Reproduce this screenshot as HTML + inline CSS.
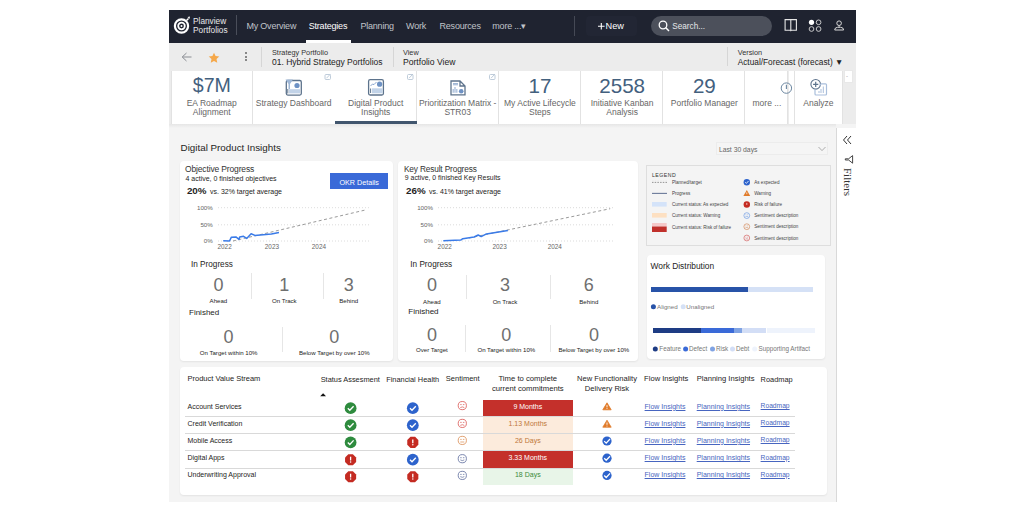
<!DOCTYPE html>
<html><head><meta charset="utf-8">
<style>
*{margin:0;padding:0;box-sizing:border-box}
html,body{width:1024px;height:512px;overflow:hidden;background:#fff;font-family:"Liberation Sans",sans-serif}
#app{position:absolute;left:169px;top:10px;width:687px;height:492px;background:#f4f4f4;overflow:hidden}
.a{position:absolute}
.t{position:absolute;white-space:nowrap;line-height:1}
.nav{left:0;top:0;width:687px;height:33px;background:#1f2330}
.tb{left:0;top:33px;width:687px;height:27px;background:#ececec}
.cards{left:0;top:60px;width:687px;height:54px;background:#ececec}
.card{position:absolute;top:0.5px;height:53.5px;background:#fff;border-right:1px solid #e2e2e2}
.main{left:0;top:114px;width:667px;height:378px;background:#f3f3f3}
.panel{position:absolute;background:#fff;border-radius:4px}
.cl{text-align:center;font-size:8.5px;line-height:9.5px;color:#666}
.big{top:6.2px;text-align:center;font-size:20.6px;color:#43607e}
</style></head><body>
<div id="app">
  <!-- NAV -->
  <div class="a nav">
    <svg class="a" style="left:4px;top:6px" width="22" height="22" viewBox="0 0 22 22">
      <circle cx="8.5" cy="10" r="6.6" fill="none" stroke="#fff" stroke-width="2.2"/>
      <circle cx="8.5" cy="10" r="3.3" fill="none" stroke="#fff" stroke-width="1.8"/>
      <circle cx="8.5" cy="10" r="1" fill="#fff"/>
      <path d="M13.5 4.5 L15.5 2.5" stroke="#fff" stroke-width="1.5"/>
      <path d="M14.5 1 L17 0.5 L16.5 3 Z" fill="#fff"/>
    </svg>
    <div class="t" style="left:24px;top:7px;font-size:8.3px;color:#e8e8ea">Planview</div>
    <div class="t" style="left:24px;top:16px;font-size:8.3px;color:#e8e8ea">Portfolios</div>
    <div class="a" style="left:67px;top:5px;width:1px;height:20px;background:#4a4e5a"></div>
    <div class="t" style="left:77.4px;top:12.2px;font-size:9px;letter-spacing:-0.2px;color:#c0c3ca">My Overview</div>
    <div class="t" style="left:139.7px;top:12.2px;font-size:9px;letter-spacing:-0.2px;color:#fff">Strategies</div>
    <div class="a" style="left:136.5px;top:30px;width:45px;height:3px;background:#fff"></div>
    <div class="t" style="left:191.4px;top:12.2px;font-size:9px;letter-spacing:-0.2px;color:#c0c3ca">Planning</div>
    <div class="t" style="left:237.1px;top:12.2px;font-size:9px;letter-spacing:-0.2px;color:#c0c3ca">Work</div>
    <div class="t" style="left:270.5px;top:12.2px;font-size:9px;letter-spacing:-0.2px;color:#c0c3ca">Resources</div>
    <div class="t" style="left:323.3px;top:12.2px;font-size:9px;letter-spacing:-0.2px;color:#c0c3ca">more ...▾</div>
    <div class="a" style="left:405px;top:5.5px;width:1px;height:20px;background:#454955"></div>
    <div class="a" style="left:417px;top:5.5px;width:50.5px;height:20px;background:#222634;border-radius:4px"></div>
    <svg class="a" style="left:428.5px;top:13px" width="7" height="7" viewBox="0 0 7 7"><path d="M3.3 0 V6.4 M0 3.2 H6.6" stroke="#fff" stroke-width="1.1"/></svg>
    <div class="t" style="left:436.6px;top:11.7px;font-size:9.2px;color:#fff">New</div>
<div class="a" style="left:482px;top:5.5px;width:121px;height:20px;background:#4c505b;border-radius:10px"></div>
    <svg class="a" style="left:488.7px;top:10px" width="12" height="12" viewBox="0 0 12 12"><circle cx="5" cy="5" r="3.8" fill="none" stroke="#fff" stroke-width="1.3"/><path d="M7.8 7.8 L11 11" stroke="#fff" stroke-width="1.5"/></svg>
    <div class="t" style="left:503.3px;top:12.9px;font-size:8.2px;color:#e6e7ea">Search...</div>
    <svg class="a" style="left:0;top:0" width="687" height="33" viewBox="0 0 687 33">
      <path d="M616.1 9.6 H621.8 V20.3 H616.1 Z M621.8 9.6 H627.4 V20.3 H621.8 Z" fill="none" stroke="#e6e6e6" stroke-width="1.1"/>
      <path d="M620.6 20.3 L621.8 21.6 L623 20.3 Z" fill="#e6e6e6"/>
      <circle cx="642.5" cy="12.3" r="2.6" fill="#fff"/>
      <circle cx="649.6" cy="12.3" r="2.35" fill="none" stroke="#d8d8d8" stroke-width="0.9"/>
      <circle cx="642.5" cy="19" r="2.35" fill="none" stroke="#d8d8d8" stroke-width="0.9"/>
      <circle cx="649.6" cy="19" r="2.35" fill="none" stroke="#d8d8d8" stroke-width="0.9"/>
      <circle cx="670.1" cy="13.2" r="2.3" fill="none" stroke="#d8d8d8" stroke-width="1"/>
      <path d="M670.1 15.5 V17.3" stroke="#d8d8d8" stroke-width="0.9"/>
      <path d="M665.7 20 Q665.7 17.5 668.5 17.3 H671.7 Q674.6 17.5 674.6 20 Z" fill="none" stroke="#d8d8d8" stroke-width="1"/>
    </svg>
  </div>

  <!-- TOOLBAR -->
  <div class="a tb">
    <svg class="a" style="left:11.5px;top:8.6px" width="11" height="10" viewBox="0 0 11 10"><path d="M10.5 5 H1.5 M5.5 1 L1.2 5 L5.5 9" fill="none" stroke="#8a8d93" stroke-width="1"/></svg>
    <svg class="a" style="left:39px;top:8.5px" width="12" height="12" viewBox="0 0 24 24"><path d="M12 1.5 L15.1 8.2 L22.5 9 L17 14 L18.5 21.5 L12 17.8 L5.5 21.5 L7 14 L1.5 9 L8.9 8.2 Z" fill="#f5a84a"/></svg>
    <div class="a" style="left:75.8px;top:9px;width:2px;height:2px;border-radius:1px;background:#666"></div>
    <div class="a" style="left:75.8px;top:12.5px;width:2px;height:2px;border-radius:1px;background:#666"></div>
    <div class="a" style="left:75.8px;top:16px;width:2px;height:2px;border-radius:1px;background:#666"></div>
    <div class="a" style="left:92px;top:3.5px;width:1px;height:20px;background:#d6d6d6"></div>
    <div class="t" style="left:103px;top:5.8px;font-size:7.3px;color:#333">Strategy Portfolio</div>
    <div class="t" style="left:103px;top:14.6px;font-size:8.5px;color:#222">01. Hybrid Strategy Portfolios</div>
    <div class="a" style="left:223.5px;top:3.5px;width:1px;height:20px;background:#d6d6d6"></div>
    <div class="t" style="left:234px;top:5.8px;font-size:7.3px;color:#333">View</div>
    <div class="t" style="left:234px;top:14.6px;font-size:8.6px;color:#222">Portfolio View</div>
    <div class="a" style="left:558px;top:3.5px;width:1px;height:19px;background:#d6d6d6"></div>
    <div class="t" style="left:568.7px;top:5.8px;font-size:7.3px;color:#333">Version</div>
    <div class="t" style="left:568.7px;top:14.6px;font-size:8.3px;color:#222">Actual/Forecast (forecast) &#9660;</div>
  </div>
  <!-- CARDS -->
  <div class="a cards">
    <div class="card" style="left:1.5px;width:82px;border-left:1px solid #e2e2e2"></div>
    <div class="card" style="left:83.5px;width:82.3px"></div>
    <div class="card" style="left:165.4px;width:82.2px"></div>
    <div class="card" style="left:247.6px;width:82.2px"></div>
    <div class="card" style="left:329.8px;width:82.2px"></div>
    <div class="card" style="left:412px;width:82.3px"></div>
    <div class="card" style="left:494.3px;width:82.1px"></div>
    <div class="card" style="left:576.4px;width:43.1px"></div>
    <div class="card" style="left:619.5px;width:6px;background:#fff"></div>
    <div class="card" style="left:625.4px;width:48.2px;border-left:1px solid #e2e2e2"></div>
    <div class="a" style="left:674.6px;top:0.3px;width:9px;height:12.7px;background:#fff;border:1px solid #e8e8e8"></div>
    <div class="t" style="left:677px;top:3px;font-size:6px;color:#999">-</div>
    <div class="a" style="left:165.8px;top:50.5px;width:81.8px;height:3.5px;background:#41566e"></div>
    <!-- card contents -->
    <div class="t" style="left:23.8px;top:5.8px;font-size:19.6px;color:#43607e">$7M</div>
    <div class="t cl" style="left:2px;width:81.5px;top:28.8px">EA Roadmap<br>Alignment</div>
    <div class="t cl" style="left:83.5px;width:82.3px;top:28.8px">Strategy Dashboard</div>
    <div class="t cl" style="left:165.8px;width:81.8px;top:28.8px">Digital Product<br>Insights</div>
    <div class="t cl" style="left:247.6px;width:82.2px;top:28.8px">Prioritization Matrix -<br>STR03</div>
    <div class="t big" style="left:329.8px;width:82.2px">17</div>
    <div class="t cl" style="left:329.8px;width:82.2px;top:28.8px">My Active Lifecycle<br>Steps</div>
    <div class="t big" style="left:412px;width:82.3px">2558</div>
    <div class="t cl" style="left:412px;width:82.3px;top:28.8px">Initiative Kanban<br>Analysis</div>
    <div class="t big" style="left:494.3px;width:82.1px">29</div>
    <div class="t cl" style="left:494.3px;width:82.1px;top:28.8px">Portfolio Manager</div>
    <div class="t cl" style="left:576.4px;width:43.1px;top:28.8px">more ...</div>
    <div class="t cl" style="left:625.4px;width:48.2px;top:28.8px">Analyze</div>
    <svg class="a" style="left:0;top:0" width="687" height="54" viewBox="0 0 687 54">
      <g stroke="#5d738c" fill="none" stroke-width="1.3">
        <rect x="117.3" y="10.5" width="15" height="14.6" rx="1.5"/>
        <rect x="199.6" y="9.7" width="14.8" height="15.3" rx="1.5"/>
        <path d="M282 11 H291 L296 16 V24.9 H282 Z M291 11 V16 H296"/>
        <circle cx="617.4" cy="18.1" r="5.2" stroke="#6b86a0" stroke-width="1"/>
        <circle cx="646.7" cy="14.3" r="4.8" stroke="#5d738c" stroke-width="1.1"/>
      </g>
      <path d="M617.4 14.8 V19" stroke="#6b86a0" stroke-width="1.1"/>
      <path d="M644.1 14.3 H649.3 M646.7 11.7 V16.9" stroke="#5d738c" stroke-width="1.2"/>
      <path d="M650.8 15.8 A5.6 5.6 0 0 1 652 13.8 H656.5 Q657.5 13.8 657.5 14.8 V24 Q657.5 25 656.5 25 H647 Q646 25 646 24 V19.2" fill="none" stroke="#a9bedb" stroke-width="1.2"/>
      <path d="M650 23 V21 M652 23 V19 M654.3 23 V16.5" stroke="#a9bedb" stroke-width="1"/>
      <!-- strategy dash -->
      <path d="M116.5 9.5 H124 L121 14 V19 H119.5 V14 Z" fill="#9fb7d6"/>
      <circle cx="128" cy="15.5" r="2.6" fill="#6e92c4"/>
      <rect x="120" y="19.2" width="11" height="4.2" fill="#c2d3e8"/>
      <path d="M118.8 19 V23.5" stroke="#5d738c" stroke-width="1"/>
      <!-- dpi -->
      <path d="M201.5 16 L203.5 14 L205 14.6 L207.5 12" fill="none" stroke="#6e92c4" stroke-width="0.8"/>
      <circle cx="210.6" cy="14.2" r="2.6" fill="#6e92c4"/>
      <rect x="203" y="18.3" width="10.5" height="5" fill="#c2d3e8"/>
      <path d="M201.6 18.5 V23" stroke="#5d738c" stroke-width="1"/>
      <!-- prior -->
      <path d="M284 13.6 H289 M284 14.8 H289" stroke="#8aa6cc" stroke-width="0.9"/>
      <path d="M284.2 22.8 V19 M286 22.8 V17 M287.8 22.8 V19" stroke="#a9bedb" stroke-width="1.3"/>
      <circle cx="292.2" cy="21.2" r="2.3" fill="#6e92c4"/>
      <g stroke="#b8c6d6" fill="none" stroke-width="0.9">
        <rect x="156" y="4.5" width="5.5" height="5" rx="1"/><path d="M157.5 8.2 L161.5 4"/>
        <rect x="238.5" y="4.5" width="5.5" height="5" rx="1"/><path d="M240 8.2 L244 4"/>
        <rect x="320.5" y="4.5" width="5.5" height="5" rx="1"/><path d="M322 8.2 L326 4"/>
      </g>
    </svg>
  </div>
  <div class="a" style="left:0;top:114px;width:667px;height:4px;background:linear-gradient(#e6e6e6,#f4f4f4)"></div>
<!-- MAIN -->
<div class="t" style="left:11.6px;top:132.7px;font-size:9.8px;color:#252423;">Digital Product Insights</div>
<div class="a" style="left:547.0px;top:131.7px;width:112.1px;height:13.5px;background:#f5f5f5;border:1px solid #ececec"></div>
<div class="t" style="left:549.9px;top:136.5px;font-size:6.8px;color:#666;">Last 30 days</div>
<svg class="a" style="left:649px;top:136px" width="8" height="6" viewBox="0 0 8 6"><path d="M0.5 1 L4 4.6 L7.5 1" fill="none" stroke="#999" stroke-width="0.8"/></svg>
<div class="a" style="left:10.8px;top:150.9px;width:213.1px;height:200.4px;background:#fff;border-radius:4px;box-shadow:0 1px 2px rgba(0,0,0,0.07)"></div>
<div class="a" style="left:229.2px;top:151.2px;width:240.3px;height:200.1px;background:#fff;border-radius:4px;box-shadow:0 1px 2px rgba(0,0,0,0.07)"></div>
<div class="a" style="left:477.4px;top:155.3px;width:184.6px;height:80.9px;background:#f4f4f4;border:1px solid #dedede"></div>
<div class="a" style="left:478.0px;top:245.3px;width:177.6px;height:103.7px;background:#fff;border-radius:4px;box-shadow:0 1px 2px rgba(0,0,0,0.07)"></div>
<div class="a" style="left:10.7px;top:357.0px;width:646.9px;height:127.5px;background:#fff;border-radius:4px;box-shadow:0 1px 2px rgba(0,0,0,0.07)"></div>
<div class="a" style="left:666.6px;top:117.6px;width:20.4px;height:374.4px;background:#fff;border-left:1.6px solid #d9d9d9"></div>
<svg class="a" style="left:673px;top:125px" width="10" height="10" viewBox="0 0 10 10"><path d="M5 1 L1.5 5 L5 9 M9 1 L5.5 5 L9 9" fill="none" stroke="#333" stroke-width="1"/></svg>
<svg class="a" style="left:0;top:0" width="687" height="492" viewBox="0 0 687 492"><path d="M683.6 145.6 V153.2 L679.6 150 H676.3 V148.8 H679.6 Z" fill="none" stroke="#333" stroke-width="0.9" stroke-linejoin="round"/></svg>
<div class="t" style="left:673px;top:158.3px;font-family:'Liberation Serif',serif;font-size:11px;color:#333;transform-origin:0 0;transform:rotate(90deg) translate(0,-11px)">Filters</div>
<div class="t" style="left:16.0px;top:154.6px;font-size:8.5px;color:#333;letter-spacing:-0.15px">Objective Progress</div>
<div class="t" style="left:16.5px;top:164.7px;font-size:7px;color:#252423;">4 active, 0 finished objectives</div>
<div class="t" style="left:17.9px;top:175.9px;font-size:9.8px;color:#252423;"><b>20%</b></div>
<div class="t" style="left:41.0px;top:178.1px;font-size:7.0px;color:#252423;">vs. 32% target average</div>
<div class="a" style="left:161.1px;top:162.6px;width:58.1px;height:16.8px;background:#3a6ad8"></div>
<div class="t" style="left:161.2px;width:58px;text-align:center;top:168.7px;font-size:7.2px;color:#fff;">OKR Details</div>
<div class="t" style="left:-16.2px;width:60px;text-align:right;top:194.7px;font-size:6.2px;color:#666;">100%</div>
<div class="t" style="left:-16.2px;width:60px;text-align:right;top:211.8px;font-size:6.2px;color:#666;">50%</div>
<div class="t" style="left:-16.2px;width:60px;text-align:right;top:228.0px;font-size:6.2px;color:#666;">0%</div>
<svg class="a" style="left:0;top:0" width="687" height="492" viewBox="0 0 687 492"><path d="M49.1 197.7 H200.9" stroke="#c8c8c8" stroke-width="0.8" stroke-dasharray="0.8 2.2"/><path d="M49.1 214.8 H200.9" stroke="#c8c8c8" stroke-width="0.8" stroke-dasharray="0.8 2.2"/><path d="M49.1 231 H200.9" stroke="#c8c8c8" stroke-width="0.8" stroke-dasharray="0.8 2.2"/><path d="M64 231 L195.5 200.2" fill="none" stroke="#9a9a9a" stroke-width="1" stroke-dasharray="3 2.5"/><path d="M54.2 230.7 L60.5 231.0 L62.4 227.2 L66.9 226.9 L70.0 229.4 L70.7 226.9 L74.5 226.3 L77.7 228.4 L82.1 223.7 L85.9 225.4 L102.4 224.1 L110.0 222.5" fill="none" stroke="#3a7be8" stroke-width="1.5" stroke-linejoin="round"/></svg>
<div class="t" style="left:48.5px;top:234.1px;font-size:6.4px;color:#666;">2022</div>
<div class="t" style="left:95.8px;top:234.1px;font-size:6.4px;color:#666;">2023</div>
<div class="t" style="left:142.8px;top:234.1px;font-size:6.4px;color:#666;">2024</div>
<div class="t" style="left:22.0px;top:251.4px;font-size:8.2px;color:#252423;">In Progress</div>
<div class="t" style="left:-10.6px;width:120px;text-align:center;top:265.8px;font-size:18px;color:#6f6f6f;">0</div>
<div class="t" style="left:-10.6px;width:120px;text-align:center;top:287.8px;font-size:6.1px;color:#252423;">Ahead</div>
<div class="t" style="left:55.3px;width:120px;text-align:center;top:265.8px;font-size:18px;color:#6f6f6f;">1</div>
<div class="t" style="left:55.3px;width:120px;text-align:center;top:288.1px;font-size:6.1px;color:#252423;">On Track</div>
<div class="t" style="left:119.7px;width:120px;text-align:center;top:265.8px;font-size:18px;color:#6f6f6f;">3</div>
<div class="t" style="left:119.7px;width:120px;text-align:center;top:287.8px;font-size:6.1px;color:#252423;">Behind</div>
<div class="a" style="left:81.8px;top:263.4px;width:1.0px;height:25.3px;background:#e6e6e6"></div>
<div class="a" style="left:153.5px;top:263.4px;width:1.0px;height:25.3px;background:#e6e6e6"></div>
<div class="t" style="left:20.0px;top:298.8px;font-size:8px;color:#252423;">Finished</div>
<div class="t" style="left:-0.4px;width:120px;text-align:center;top:318.1px;font-size:18px;color:#6f6f6f;">0</div>
<div class="t" style="left:-0.4px;width:120px;text-align:center;top:339.6px;font-size:6.1px;color:#252423;">On Target within 10%</div>
<div class="t" style="left:105.3px;width:120px;text-align:center;top:318.1px;font-size:18px;color:#6f6f6f;">0</div>
<div class="t" style="left:105.3px;width:120px;text-align:center;top:339.6px;font-size:6.1px;color:#252423;">Below Target by over 10%</div>
<div class="a" style="left:112.8px;top:317.0px;width:1.0px;height:25.0px;background:#e6e6e6"></div>
<div class="t" style="left:234.9px;top:154.8px;font-size:8.3px;color:#333;letter-spacing:-0.15px">Key Result Progress</div>
<div class="t" style="left:235.8px;top:164.8px;font-size:6.9px;color:#252423;">9 active, 0 finished Key Results</div>
<div class="t" style="left:237.0px;top:175.9px;font-size:9.8px;color:#252423;"><b>26%</b></div>
<div class="t" style="left:260.0px;top:178.1px;font-size:7.0px;color:#252423;">vs. 41% target average</div>
<div class="t" style="left:204.0px;width:60px;text-align:right;top:194.7px;font-size:6.2px;color:#666;">100%</div>
<div class="t" style="left:204.0px;width:60px;text-align:right;top:211.8px;font-size:6.2px;color:#666;">50%</div>
<div class="t" style="left:204.0px;width:60px;text-align:right;top:228.0px;font-size:6.2px;color:#666;">0%</div>
<svg class="a" style="left:0;top:0" width="687" height="492" viewBox="0 0 687 492"><path d="M269.2 197.7 H445.7" stroke="#c8c8c8" stroke-width="0.8" stroke-dasharray="0.8 2.2"/><path d="M269.2 214.8 H445.7" stroke="#c8c8c8" stroke-width="0.8" stroke-dasharray="0.8 2.2"/><path d="M269.2 231 H445.7" stroke="#c8c8c8" stroke-width="0.8" stroke-dasharray="0.8 2.2"/><path d="M300 228 L441.2 198.7" fill="none" stroke="#9a9a9a" stroke-width="1" stroke-dasharray="3 2.5"/><path d="M274.3 230.7 L291.7 230.1 L293.8 228.7 L305.1 227.0 L309.2 225.0 L312.2 226.6 L317.4 223.9 L338.9 220.5" fill="none" stroke="#3a7be8" stroke-width="1.5" stroke-linejoin="round"/></svg>
<div class="t" style="left:268.6px;top:234.1px;font-size:6.4px;color:#666;">2022</div>
<div class="t" style="left:323.5px;top:234.1px;font-size:6.4px;color:#666;">2023</div>
<div class="t" style="left:378.7px;top:234.1px;font-size:6.4px;color:#666;">2024</div>
<div class="t" style="left:241.3px;top:250.9px;font-size:8.2px;color:#252423;">In Progress</div>
<div class="t" style="left:202.9px;width:120px;text-align:center;top:266.2px;font-size:18px;color:#6f6f6f;">0</div>
<div class="t" style="left:202.9px;width:120px;text-align:center;top:288.8px;font-size:6.1px;color:#252423;">Ahead</div>
<div class="t" style="left:276.0px;width:120px;text-align:center;top:266.2px;font-size:18px;color:#6f6f6f;">3</div>
<div class="t" style="left:276.0px;width:120px;text-align:center;top:288.8px;font-size:6.1px;color:#252423;">On Track</div>
<div class="t" style="left:359.8px;width:120px;text-align:center;top:266.2px;font-size:18px;color:#6f6f6f;">6</div>
<div class="t" style="left:359.8px;width:120px;text-align:center;top:288.8px;font-size:6.1px;color:#252423;">Behind</div>
<div class="a" style="left:296.7px;top:265.4px;width:1.0px;height:24.1px;background:#e6e6e6"></div>
<div class="a" style="left:381.0px;top:265.4px;width:1.0px;height:24.1px;background:#e6e6e6"></div>
<div class="t" style="left:239.3px;top:298.4px;font-size:8px;color:#252423;">Finished</div>
<div class="t" style="left:202.9px;width:120px;text-align:center;top:315.7px;font-size:18px;color:#6f6f6f;">0</div>
<div class="t" style="left:202.9px;width:120px;text-align:center;top:336.8px;font-size:6.1px;color:#252423;">Over Target</div>
<div class="t" style="left:277.3px;width:120px;text-align:center;top:315.7px;font-size:18px;color:#6f6f6f;">0</div>
<div class="t" style="left:277.3px;width:120px;text-align:center;top:336.8px;font-size:6.1px;color:#252423;">On Target within 10%</div>
<div class="t" style="left:364.9px;width:120px;text-align:center;top:315.7px;font-size:18px;color:#6f6f6f;">0</div>
<div class="t" style="left:364.9px;width:120px;text-align:center;top:336.8px;font-size:6.1px;color:#252423;">Below Target by over 10%</div>
<div class="a" style="left:295.9px;top:315.0px;width:1.0px;height:26.6px;background:#e6e6e6"></div>
<div class="a" style="left:381.0px;top:315.0px;width:1.0px;height:26.6px;background:#e6e6e6"></div>
<div class="t" style="left:482.9px;top:162.5px;font-size:5.2px;color:#333;letter-spacing:0.5px">LEGEND</div>
<div class="t" style="left:502.9px;top:170.9px;font-size:4.6px;color:#444;">Planned/target</div>
<div class="t" style="left:502.9px;top:182.1px;font-size:4.6px;color:#444;">Progress</div>
<div class="t" style="left:502.9px;top:192.9px;font-size:4.6px;color:#444;">Current status: As expected</div>
<div class="t" style="left:502.9px;top:204.1px;font-size:4.6px;color:#444;">Current status: Warning</div>
<div class="t" style="left:502.9px;top:215.8px;font-size:4.6px;color:#444;">Current status: Risk of failure</div>
<svg class="a" style="left:0;top:0" width="687" height="492" viewBox="0 0 687 492"><path d="M483 172.5 H498" stroke="#888" stroke-width="0.8" stroke-dasharray="1.5 1.2"/><path d="M483 171.2 H498" stroke="#bbb" stroke-width="0.5" stroke-dasharray="0.6 1"/><path d="M483 183.4 H498" stroke="#6b7a99" stroke-width="1.1"/><rect x="483" y="192" width="14.7" height="4.6" fill="#d4e3f9"/><rect x="483" y="203" width="14.7" height="4.6" fill="#fde0c2"/><rect x="483" y="213" width="14.7" height="3.5" fill="#f5c9c9"/><rect x="483" y="216.5" width="14.7" height="5.5" fill="#c0302b"/><circle cx="577.8" cy="172.2" r="3.2" fill="#2d63cc"/><path d="M576.1999999999999 172.2 L577.4 173.39999999999998 L579.5 171.0" fill="none" stroke="#fff" stroke-width="0.8"/><path d="M577.8 180.1 L581.1999999999999 186.0 H574.4 Z" fill="#e07b2a"/><path d="M577.8 182.4 V184.20000000000002" stroke="#fff" stroke-width="0.7"/><circle cx="577.8" cy="194.5" r="3.2" fill="#c42b22"/><path d="M577.8 192.9 V194.9" stroke="#fff" stroke-width="0.7"/><circle cx="577.8" cy="205.6" r="2.9" fill="none" stroke="#5b8ee0" stroke-width="0.6"/><path d="M576.4 206.79999999999998 Q577.8 205.9 579.1999999999999 206.79999999999998" fill="none" stroke="#5b8ee0" stroke-width="0.5"/><path d="M576.5 204.79999999999998 H577.3 M578.3 204.79999999999998 H579.0999999999999" stroke="#5b8ee0" stroke-width="0.5"/><circle cx="577.8" cy="216.7" r="2.9" fill="none" stroke="#cf7a45" stroke-width="0.6"/><path d="M576.4 217.89999999999998 Q577.8 217.0 579.1999999999999 217.89999999999998" fill="none" stroke="#cf7a45" stroke-width="0.5"/><path d="M576.5 215.89999999999998 H577.3 M578.3 215.89999999999998 H579.0999999999999" stroke="#cf7a45" stroke-width="0.5"/><circle cx="577.8" cy="228" r="2.9" fill="none" stroke="#d04d4d" stroke-width="0.6"/><path d="M576.4 229.2 Q577.8 228.3 579.1999999999999 229.2" fill="none" stroke="#d04d4d" stroke-width="0.5"/><path d="M576.5 227.2 H577.3 M578.3 227.2 H579.0999999999999" stroke="#d04d4d" stroke-width="0.5"/></svg>
<div class="t" style="left:585.2px;top:170.9px;font-size:4.6px;color:#444;">As expected</div>
<div class="t" style="left:585.2px;top:182.1px;font-size:4.6px;color:#444;">Warning</div>
<div class="t" style="left:585.2px;top:193.2px;font-size:4.6px;color:#444;">Risk of failure</div>
<div class="t" style="left:585.2px;top:204.3px;font-size:4.6px;color:#444;">Sentiment description</div>
<div class="t" style="left:585.2px;top:215.4px;font-size:4.6px;color:#444;">Sentiment description</div>
<div class="t" style="left:585.2px;top:226.7px;font-size:4.6px;color:#444;">Sentiment description</div>
<div class="t" style="left:481.5px;top:252.1px;font-size:8.4px;color:#252423;">Work Distribution</div>
<div class="a" style="left:481.6px;top:277.0px;width:97.8px;height:5.2px;background:#2853a8"></div>
<div class="a" style="left:579.4px;top:277.0px;width:65.0px;height:5.2px;background:#d5e1f6"></div>
<svg class="a" style="left:0;top:0" width="687" height="492" viewBox="0 0 687 492"><circle cx="484.4" cy="296.7" r="2.5" fill="#2853a8"/><circle cx="514.2" cy="296.7" r="2.5" fill="#d5e1f6"/><circle cx="486.3" cy="339" r="2.5" fill="#1e3c84"/><circle cx="516.6" cy="339" r="2.5" fill="#3a6ad8"/><circle cx="543.5" cy="339" r="2.5" fill="#80a3e3"/><circle cx="563.5" cy="339" r="2.5" fill="#d3def6"/><circle cx="585.7" cy="339" r="2.5" fill="#eef3fc"/></svg>
<div class="t" style="left:488.0px;top:293.7px;font-size:6.2px;color:#777;">Aligned</div>
<div class="t" style="left:517.3px;top:293.7px;font-size:6.2px;color:#777;">Unaligned</div>
<div class="a" style="left:483.7px;top:317.8px;width:48.3px;height:5.4px;background:#1e3c84"></div>
<div class="a" style="left:532.0px;top:317.8px;width:32.9px;height:5.4px;background:#3a6ad8"></div>
<div class="a" style="left:564.9px;top:317.8px;width:7.9px;height:5.4px;background:#80a3e3"></div>
<div class="a" style="left:572.8px;top:317.8px;width:24.7px;height:5.4px;background:#d3def6"></div>
<div class="a" style="left:597.5px;top:317.8px;width:48.7px;height:5.4px;background:#eef3fc"></div>
<div class="t" style="left:490.3px;top:336.0px;font-size:6.3px;color:#777;">Feature</div>
<div class="t" style="left:520.0px;top:336.0px;font-size:6.3px;color:#777;">Defect</div>
<div class="t" style="left:547.0px;top:336.0px;font-size:6.3px;color:#777;">Risk</div>
<div class="t" style="left:567.0px;top:336.0px;font-size:6.3px;color:#777;">Debt</div>
<div class="t" style="left:589.5px;top:336.0px;font-size:6.3px;color:#777;">Supporting Artifact</div>
<div class="t" style="left:18.5px;top:365.4px;font-size:7.5px;color:#252423;">Product Value Stream</div>
<div class="t" style="left:151.7px;top:365.5px;font-size:7.4px;color:#252423;">Status Assesment</div>
<div class="t" style="left:217.2px;top:365.5px;font-size:7.4px;color:#252423;">Financial Health</div>
<div class="t" style="left:276.8px;top:365.4px;font-size:7.5px;color:#252423;">Sentiment</div>
<div class="t" style="left:298.8px;width:120px;text-align:center;top:365.3px;font-size:7.7px;color:#252423;">Time to complete</div>
<div class="t" style="left:298.8px;width:120px;text-align:center;top:374.7px;font-size:7.7px;color:#252423;">current commitments</div>
<div class="t" style="left:378.0px;width:120px;text-align:center;top:365.4px;font-size:7.6px;color:#252423;">New Functionality</div>
<div class="t" style="left:378.0px;width:120px;text-align:center;top:374.8px;font-size:7.6px;color:#252423;">Delivery Risk</div>
<div class="t" style="left:475.1px;top:365.4px;font-size:7.6px;color:#252423;">Flow Insights</div>
<div class="t" style="left:527.7px;top:365.4px;font-size:7.6px;color:#252423;">Planning Insights</div>
<div class="t" style="left:591.6px;top:365.5px;font-size:7.4px;color:#252423;">Roadmap</div>
<div class="a" style="left:313.6px;top:389.8px;width:90.4px;height:16.7px;background:#c4302b"></div>
<div class="t" style="left:298.8px;width:120px;text-align:center;top:392.7px;font-size:7px;color:#fff;">9 Months</div>
<div class="t" style="left:18.5px;top:392.9px;font-size:7px;color:#252423;">Account Services</div>
<div class="t" style="left:475.6px;top:392.8px;font-size:7.0px;color:#4765c0;text-decoration:underline">Flow Insights</div>
<div class="t" style="left:527.7px;top:392.8px;font-size:7.0px;color:#4765c0;text-decoration:underline">Planning Insights</div>
<div class="t" style="left:591.6px;top:393.1px;font-size:6.7px;color:#4765c0;text-decoration:underline">Roadmap</div>
<div class="a" style="left:313.6px;top:406.5px;width:90.4px;height:17.0px;background:#fcebdc"></div>
<div class="t" style="left:298.8px;width:120px;text-align:center;top:409.6px;font-size:7px;color:#c0773a;">1.13 Months</div>
<div class="t" style="left:18.5px;top:409.8px;font-size:7px;color:#252423;">Credit Verification</div>
<div class="t" style="left:475.6px;top:409.7px;font-size:7.0px;color:#4765c0;text-decoration:underline">Flow Insights</div>
<div class="t" style="left:527.7px;top:409.7px;font-size:7.0px;color:#4765c0;text-decoration:underline">Planning Insights</div>
<div class="t" style="left:591.6px;top:409.9px;font-size:6.7px;color:#4765c0;text-decoration:underline">Roadmap</div>
<div class="a" style="left:16.2px;top:406.1px;width:610.2px;height:1.0px;background:#d9d9d9"></div>
<div class="a" style="left:313.6px;top:423.5px;width:90.4px;height:17.3px;background:#fcebdc"></div>
<div class="t" style="left:298.8px;width:120px;text-align:center;top:426.7px;font-size:7px;color:#c0773a;">26 Days</div>
<div class="t" style="left:18.5px;top:426.9px;font-size:7px;color:#252423;">Mobile Access</div>
<div class="t" style="left:475.6px;top:426.8px;font-size:7.0px;color:#4765c0;text-decoration:underline">Flow Insights</div>
<div class="t" style="left:527.7px;top:426.8px;font-size:7.0px;color:#4765c0;text-decoration:underline">Planning Insights</div>
<div class="t" style="left:591.6px;top:427.1px;font-size:6.7px;color:#4765c0;text-decoration:underline">Roadmap</div>
<div class="a" style="left:16.2px;top:423.1px;width:610.2px;height:1.0px;background:#d9d9d9"></div>
<div class="a" style="left:313.6px;top:440.8px;width:90.4px;height:17.5px;background:#c4302b"></div>
<div class="t" style="left:298.8px;width:120px;text-align:center;top:444.1px;font-size:7px;color:#fff;">3.33 Months</div>
<div class="t" style="left:18.5px;top:444.3px;font-size:7px;color:#252423;">Digital Apps</div>
<div class="t" style="left:475.6px;top:444.2px;font-size:7.0px;color:#4765c0;text-decoration:underline">Flow Insights</div>
<div class="t" style="left:527.7px;top:444.2px;font-size:7.0px;color:#4765c0;text-decoration:underline">Planning Insights</div>
<div class="t" style="left:591.6px;top:444.5px;font-size:6.7px;color:#4765c0;text-decoration:underline">Roadmap</div>
<div class="a" style="left:16.2px;top:440.4px;width:610.2px;height:1.0px;background:#d9d9d9"></div>
<div class="a" style="left:313.6px;top:458.3px;width:90.4px;height:16.5px;background:#e8f5e8"></div>
<div class="t" style="left:298.8px;width:120px;text-align:center;top:461.1px;font-size:7px;color:#3b8a3b;">18 Days</div>
<div class="t" style="left:18.5px;top:461.3px;font-size:7px;color:#252423;">Underwriting Approval</div>
<div class="t" style="left:475.6px;top:461.2px;font-size:7.0px;color:#4765c0;text-decoration:underline">Flow Insights</div>
<div class="t" style="left:527.7px;top:461.2px;font-size:7.0px;color:#4765c0;text-decoration:underline">Planning Insights</div>
<div class="t" style="left:591.6px;top:461.5px;font-size:6.7px;color:#4765c0;text-decoration:underline">Roadmap</div>
<div class="a" style="left:16.2px;top:457.9px;width:610.2px;height:1.0px;background:#d9d9d9"></div>
<svg class="a" style="left:0;top:0" width="687" height="492" viewBox="0 0 687 492"><path d="M151.2 386.3 L154.1 383.3 L157 386.3 Z" fill="#111"/><circle cx="181.6" cy="398.2" r="5.9" fill="#2e8b3e"/><path d="M178.80 398.30 L180.80 400.30 L184.60 396.20" fill="none" stroke="#fff" stroke-width="1.3"/><circle cx="243.8" cy="398.2" r="5.9" fill="#2d63cc"/><path d="M241.00 398.30 L243.00 400.30 L246.80 396.20" fill="none" stroke="#fff" stroke-width="1.3"/><circle cx="181.6" cy="415.2" r="5.9" fill="#2e8b3e"/><path d="M178.80 415.30 L180.80 417.30 L184.60 413.20" fill="none" stroke="#fff" stroke-width="1.3"/><circle cx="243.8" cy="415.2" r="5.9" fill="#2d63cc"/><path d="M241.00 415.30 L243.00 417.30 L246.80 413.20" fill="none" stroke="#fff" stroke-width="1.3"/><circle cx="181.6" cy="432.4" r="5.9" fill="#2e8b3e"/><path d="M178.80 432.50 L180.80 434.50 L184.60 430.40" fill="none" stroke="#fff" stroke-width="1.3"/><polygon points="249.34,434.70 246.10,437.94 241.50,437.94 238.26,434.70 238.26,430.10 241.50,426.86 246.10,426.86 249.34,430.10" fill="#c42b22"/><path d="M243.8 429.40 V433.20" stroke="#fff" stroke-width="1.3"/><circle cx="243.8" cy="434.80" r="0.75" fill="#fff"/><polygon points="187.14,452.00 183.90,455.24 179.30,455.24 176.06,452.00 176.06,447.40 179.30,444.16 183.90,444.16 187.14,447.40" fill="#c42b22"/><path d="M181.6 446.70 V450.50" stroke="#fff" stroke-width="1.3"/><circle cx="181.6" cy="452.10" r="0.75" fill="#fff"/><circle cx="243.8" cy="449.7" r="5.9" fill="#2d63cc"/><path d="M241.00 449.80 L243.00 451.80 L246.80 447.70" fill="none" stroke="#fff" stroke-width="1.3"/><polygon points="187.14,469.00 183.90,472.24 179.30,472.24 176.06,469.00 176.06,464.40 179.30,461.16 183.90,461.16 187.14,464.40" fill="#c42b22"/><path d="M181.6 463.70 V467.50" stroke="#fff" stroke-width="1.3"/><circle cx="181.6" cy="469.10" r="0.75" fill="#fff"/><polygon points="249.34,469.00 246.10,472.24 241.50,472.24 238.26,469.00 238.26,464.40 241.50,461.16 246.10,461.16 249.34,464.40" fill="#c42b22"/><path d="M243.8 463.70 V467.50" stroke="#fff" stroke-width="1.3"/><circle cx="243.8" cy="469.10" r="0.75" fill="#fff"/><circle cx="293.3" cy="395.6" r="4.1" fill="none" stroke="#d9534f" stroke-width="0.8"/><path d="M291.30 397.60 Q293.3 396.20 295.30 397.60" fill="none" stroke="#d9534f" stroke-width="0.7"/><path d="M291.20 394.60 H292.70 M293.90 394.60 H295.40" stroke="#d9534f" stroke-width="0.7"/><circle cx="293.3" cy="413.4" r="4.1" fill="none" stroke="#d9534f" stroke-width="0.8"/><path d="M291.30 415.40 Q293.3 414.00 295.30 415.40" fill="none" stroke="#d9534f" stroke-width="0.7"/><path d="M291.20 412.40 H292.70 M293.90 412.40 H295.40" stroke="#d9534f" stroke-width="0.7"/><circle cx="293.3" cy="430.4" r="4.1" fill="none" stroke="#d98a4f" stroke-width="0.8"/><path d="M291.30 432.00 H295.30" fill="none" stroke="#d98a4f" stroke-width="0.7"/><path d="M291.20 429.40 H292.70 M293.90 429.40 H295.40" stroke="#d98a4f" stroke-width="0.7"/><circle cx="293.3" cy="448.7" r="4.1" fill="none" stroke="#5a6a9a" stroke-width="0.8"/><path d="M291.30 449.90 Q293.3 451.30 295.30 449.90" fill="none" stroke="#5a6a9a" stroke-width="0.7"/><path d="M291.20 447.70 H292.70 M293.90 447.70 H295.40" stroke="#5a6a9a" stroke-width="0.7"/><circle cx="293.3" cy="465.4" r="4.1" fill="none" stroke="#5a6a9a" stroke-width="0.8"/><path d="M291.30 466.60 Q293.3 468.00 295.30 466.60" fill="none" stroke="#5a6a9a" stroke-width="0.7"/><path d="M291.20 464.40 H292.70 M293.90 464.40 H295.40" stroke="#5a6a9a" stroke-width="0.7"/><path d="M438 392.80 L442.20 399.80 H433.80 Z" fill="#e07b2a" stroke="#e07b2a" stroke-width="0.8" stroke-linejoin="round"/><path d="M438 395.10 V397.40" stroke="#fff" stroke-width="0.9"/><circle cx="438" cy="398.50" r="0.5" fill="#fff"/><path d="M438 410.20 L442.20 417.20 H433.80 Z" fill="#e07b2a" stroke="#e07b2a" stroke-width="0.8" stroke-linejoin="round"/><path d="M438 412.50 V414.80" stroke="#fff" stroke-width="0.9"/><circle cx="438" cy="415.90" r="0.5" fill="#fff"/><circle cx="438" cy="431" r="4.6" fill="#2d63cc"/><path d="M435.20 431.10 L437.20 433.10 L441.00 429.00" fill="none" stroke="#fff" stroke-width="1.3"/><circle cx="438" cy="448.2" r="4.6" fill="#2d63cc"/><path d="M435.20 448.30 L437.20 450.30 L441.00 446.20" fill="none" stroke="#fff" stroke-width="1.3"/><circle cx="438" cy="465.4" r="4.6" fill="#2d63cc"/><path d="M435.20 465.50 L437.20 467.50 L441.00 463.40" fill="none" stroke="#fff" stroke-width="1.3"/></svg>
</div>
</body></html>
